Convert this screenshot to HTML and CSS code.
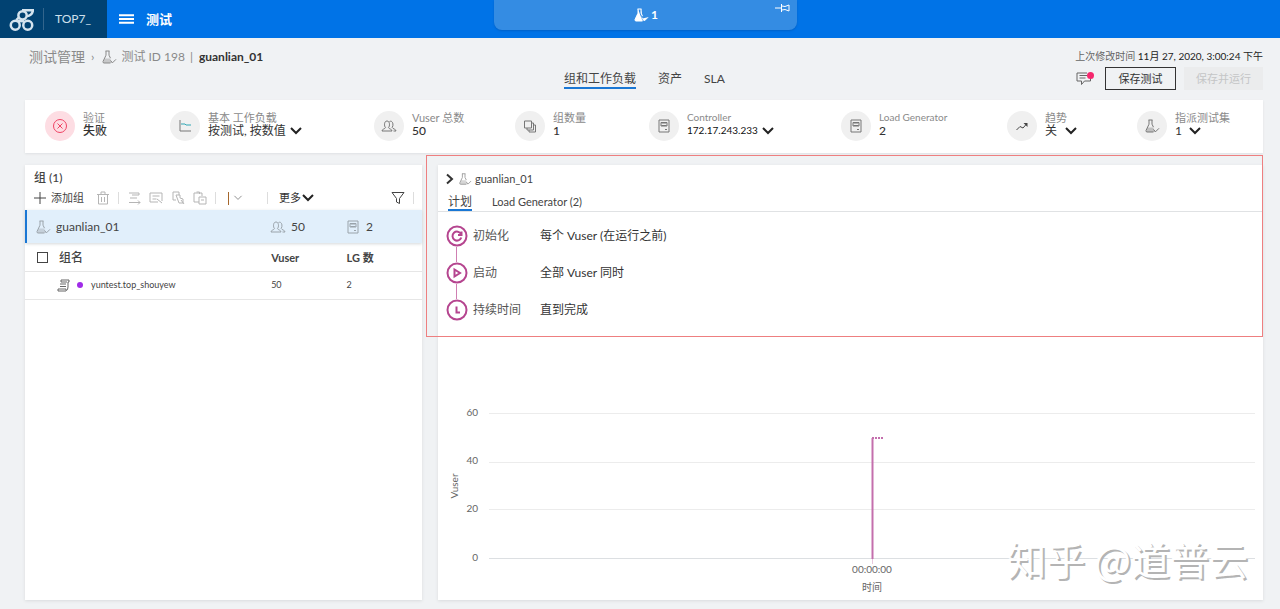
FILE: index.html
```html
<!DOCTYPE html>
<html lang="zh-CN">
<head>
<meta charset="utf-8">
<meta name="viewport" content="width=device-width, initial-scale=1">
<title>guanlian_01</title>
<link rel="stylesheet" href="styles.css">
</head>
<body>
<svg class="symbols" aria-hidden="true">
  <symbol id="flask" viewBox="0 0 16 16"><path d="M4.500 2h4M5 2v4.200L2 12.500q-.2 1.500 1 1.500h6.500M8 2v4.200l1.500 3M9.500 11.500l2 2.300 3.500-3.500"/><path class="fill" d="M3.500 9.500h5.500l2.500 4.500H2z"/></symbol>
  <symbol id="users" viewBox="0 0 16 16"><path d="M1 13c0-2 3-2 3.500-3.300C3 8 3 3 6 3s3 5 1.500 6.700C8 11 11 11 11 13zM8.500 3.500c3-1.500 4.500 3 2.700 6C11.700 11 15 11 15 13h-2.500"/></symbol>
  <symbol id="server" viewBox="0 0 16 16"><path d="M3 2h10v12H3zM5.500 5h5M5.500 7.500h5M9 11.500h2M5 4.500h6v3.500H5z"/></symbol>
  <symbol id="chevron" viewBox="0 0 14 10"><path d="M2 2l5 5 5-5"/></symbol>
</svg>

<header class="topbar">
  <div class="topbar-left">
    <a class="brand" href="#" aria-label="TOP7_">
      <svg class="logo" viewBox="0 0 24 24" aria-hidden="true"><circle cx="6" cy="17.500" r="4.300"/><circle cx="18" cy="17.500" r="4.300"/><circle cx="13" cy="8" r="4"/><path d="M12.500 3H23q-.5 5-6 6M7 12.500l3-3M8.500 13.500l6 .2"/></svg>
      <span class="brand-name">TOP7_</span>
    </a>
    <button class="menu-button" type="button"><svg class="burger" viewBox="0 0 16 12" aria-hidden="true"><path d="M0 2h16M0 6h16M0 10h16"/></svg><span>测试</span></button>
  </div>
  <div class="running">
    <svg class="icon running-icon"><use href="#flask"/></svg><span>1</span>
    <button class="pin" type="button" aria-label="固定"><svg viewBox="0 0 16 10"><path d="M0 5h6M6.500 1v8M7 3l3 .5 4-1.500v6l-4-1.500-3 .5"/></svg></button>
  </div>
</header>

<div class="page">
  <div class="page-head">
    <nav class="crumbs" aria-label="导航">
      <a class="crumb-root" href="#">测试管理</a><span class="crumb-sep">›</span><svg class="icon"><use href="#flask"/></svg><a href="#">测试 ID 198</a><span class="crumb-bar">|</span><strong>guanlian_01</strong>
    </nav>
    <nav class="tabs" aria-label="视图">
      <a class="tab active" href="#">组和工作负载</a><a class="tab" href="#">资产</a><a class="tab" href="#">SLA</a>
    </nav>
    <div class="actions">
      <p class="modified"><span>上次修改时间</span> <time datetime="2020-11-27T15:00:24">11月 27, 2020, 3:00:24 下午</time></p>
      <div class="action-row">
        <button class="comment" type="button" aria-label="注释"><svg viewBox="0 0 20 16"><path d="M15.500 7v3H9.500l-3 3.500V10H2V2h10M4.500 4.500h8M4.500 7h6"/><circle cx="15.500" cy="4.500" r="3.500"/></svg></button>
        <button class="btn" type="button">保存测试</button>
        <button class="btn btn-off" type="button" disabled>保存并运行</button>
      </div>
    </div>
  </div>

  <section class="summary">
    <div class="stat"><span class="badge badge-error"><svg class="icon" viewBox="0 0 16 16"><circle cx="8" cy="8" r="6.500"/><path d="M5.500 5.500l5 5M10.500 5.500l-5 5"/></svg></span><div class="stat-text"><p class="stat-label">验证</p><p class="stat-value">失败</p></div></div>
    <div class="stat"><span class="badge"><svg class="icon" viewBox="0 0 16 16"><path d="M3 2v11h11"/><path class="teal" d="M4 6h4l1 1h5"/></svg></span><div class="stat-text"><label class="stat-label" for="mode">基本 工作负载</label><div class="pick"><select id="mode"><option>按测试, 按数值</option></select><svg class="chev"><use href="#chevron"/></svg></div></div></div>
    <div class="stat"><span class="badge"><svg class="icon"><use href="#users"/></svg></span><div class="stat-text"><p class="stat-label">Vuser 总数</p><p class="stat-value">50</p></div></div>
    <div class="stat"><span class="badge"><svg class="icon" viewBox="0 0 16 16"><path d="M2.500 3h7v7h-7zM5 10v2h6.500V5H9.500M7 12v2h6.500V7H11.500"/></svg></span><div class="stat-text"><p class="stat-label">组数量</p><p class="stat-value">1</p></div></div>
    <div class="stat"><span class="badge"><svg class="icon"><use href="#server"/></svg></span><div class="stat-text"><label class="stat-label latin" for="controller">Controller</label><div class="pick latin"><select id="controller"><option>172.17.243.233</option></select><svg class="chev"><use href="#chevron"/></svg></div></div></div>
    <div class="stat"><span class="badge"><svg class="icon"><use href="#server"/></svg></span><div class="stat-text"><p class="stat-label latin">Load Generator</p><p class="stat-value">2</p></div></div>
    <div class="stat"><span class="badge"><svg class="icon dark" viewBox="0 0 16 16"><path d="M2.500 12l3.500-3.500 3 1.500 3.500-4"/><path class="head" d="M9.500 5h4v4z"/></svg></span><div class="stat-text"><label class="stat-label" for="trend">趋势</label><div class="pick pick-wide"><select id="trend"><option>关</option></select><svg class="chev"><use href="#chevron"/></svg></div></div></div>
    <div class="stat"><span class="badge"><svg class="icon"><use href="#flask"/></svg></span><div class="stat-text"><label class="stat-label" for="sets">指派测试集</label><div class="pick pick-wide"><select id="sets"><option>1</option></select><svg class="chev"><use href="#chevron"/></svg></div></div></div>
  </section>

  <main class="panels">
    <section class="card groups">
      <h2 class="groups-title">组 (1)</h2>
      <div class="toolbar">
        <button class="tool add" type="button"><svg class="icon" viewBox="0 0 14 14"><path d="M7 1v12M1 7h12"/></svg>添加组</button>
        <button class="tool" type="button" aria-label="删除"><svg class="icon" viewBox="0 0 14 14"><path d="M1 3.500h12M5 3V1h4v2M2.500 4v9h9V4M5.500 6v5M8.500 6v5"/></svg></button>
        <span class="divider"></span>
        <div class="tool-set">
          <button class="tool" type="button" aria-label="添加脚本"><svg class="icon" viewBox="0 0 14 14"><path d="M2 2h10v2H5M3 7h7M2 11.500h11M11 9.500l2 2-2 2"/></svg></button>
          <button class="tool" type="button" aria-label="编辑"><svg class="icon" viewBox="0 0 14 14"><path d="M1 2h12v8M1 2v9h8M3.500 5h7M3.500 8h4M8 8l5 4"/></svg></button>
          <button class="tool" type="button" aria-label="复制"><svg class="icon" viewBox="0 0 14 14"><path d="M2 1h6v3M2 1v8h3M5 4h4v3l3 1v4H8zM10 9l3 4"/></svg></button>
          <button class="tool" type="button" aria-label="粘贴"><svg class="icon" viewBox="0 0 14 14"><path d="M1 2h8v3M1 2v9h5M3.500 1h3v2M6 6h7v7H6zM8 9h3"/></svg></button>
        </div>
        <span class="divider"></span>
        <button class="tool color" type="button" aria-label="颜色"><span class="swatch"></span><svg class="icon"><use href="#chevron"/></svg></button>
        <span class="divider"></span>
        <button class="tool more" type="button">更多<svg class="chev"><use href="#chevron"/></svg></button>
        <button class="tool filter" type="button" aria-label="筛选"><svg class="icon" viewBox="0 0 14 14"><path d="M1 1.500h12L8.500 7.500v5l-3-1.500V7.500z"/></svg></button>
        <span class="divider"></span>
      </div>
      <div class="selected cols">
        <span class="cell"><svg class="icon"><use href="#flask"/></svg>guanlian_01</span>
        <span class="cell"><svg class="icon"><use href="#users"/></svg>50</span>
        <span class="cell"><svg class="icon"><use href="#server"/></svg>2</span>
      </div>
      <table class="scripts">
        <colgroup><col class="c-name"><col class="c-vuser"><col></colgroup>
        <thead><tr><th><label class="check"><input type="checkbox">组名</label></th><th>Vuser</th><th>LG 数</th></tr></thead>
        <tbody><tr><td><span class="script"><svg class="icon" viewBox="0 0 14 14"><path d="M4 2h8v2h-1v5M4 2v2h6M3 6h6M3 8.500h6M1 11h8v1.500q2 0 2-3.500M1 11v2h8"/></svg><i class="dot"></i>yuntest.top_shouyew</span></td><td>50</td><td>2</td></tr></tbody>
      </table>
    </section>

    <section class="card detail">
      <div class="plan">
        <div class="detail-title"><button class="expand" type="button" aria-label="展开"><svg viewBox="0 0 10 12"><path d="M2 1.500l5 4.500-5 4.500"/></svg></button><svg class="icon"><use href="#flask"/></svg><span>guanlian_01</span></div>
        <nav class="subtabs" aria-label="详细信息"><a class="subtab active" href="#">计划</a><a class="subtab" href="#">Load Generator (2)</a></nav>
        <dl class="steps">
          <div class="step"><svg class="step-icon" viewBox="0 0 22 22"><circle cx="11" cy="11" r="9.500"/><path d="M15 9a4.500 4.500 0 1 0 .3 3.500M15.500 6.500V10H12"/></svg><dt>初始化</dt><dd>每个 Vuser (在运行之前)</dd></div>
          <div class="step"><svg class="step-icon" viewBox="0 0 22 22"><circle cx="11" cy="11" r="9.500"/><path d="M8.500 7.500v7l5.500-3.500z"/></svg><dt>启动</dt><dd>全部 Vuser 同时</dd></div>
          <div class="step"><svg class="step-icon" viewBox="0 0 22 22"><circle cx="11" cy="11" r="9.500"/><path d="M10.500 7.500v6H14"/></svg><dt>持续时间</dt><dd>直到完成</dd></div>
        </dl>
      </div>
      <svg class="chart" viewBox="0 0 825 262" role="img" aria-label="Vuser 时间">
        <path class="grid" d="M51 76.500H817M51 125.500H817M51 172.500H817"/>
        <path class="axis" d="M51 221.500H817"/>
        <g class="ticks end"><text x="40" y="79">60</text><text x="40" y="127">40</text><text x="40" y="175">20</text><text x="40" y="224">0</text></g>
        <g class="ticks mid"><text x="434" y="236">00:00:00</text><text x="434" y="254">时间</text><text transform="translate(20 149) rotate(-90)">Vuser</text></g>
        <path class="series-tail" d="M434.500 222v5"/>
        <path class="series" d="M434.500 222V101"/>
        <path class="series dots" d="M434 101h12"/>
      </svg>
      <p class="watermark">知乎 @道普云</p>
    </section>
  </main>
</div>
</body>
</html>
```

FILE: styles.css
```css
* { box-sizing: border-box; }

body {
  margin: 0;
  min-height: 100vh;
  display: flex;
  flex-direction: column;
  background: #f0f2f4;
  color: #444;
  font: 12px/16px Lato, "Noto Sans CJK SC", sans-serif;
}

p, h2, dl, dd { margin: 0; }
a { color: inherit; text-decoration: none; }

button {
  display: flex;
  align-items: center;
  padding: 0;
  border: 0;
  background: none;
  color: inherit;
  font: inherit;
}

svg { flex: none; fill: none; stroke: currentColor; }
.symbols { position: absolute; width: 0; height: 0; }
.icon { width: 16px; height: 16px; }
.fill { fill: currentColor; fill-opacity: 0.4; stroke: none; }
.chev { width: 14px; height: 10px; stroke: #222; stroke-width: 2; }

/* Top bar */
.topbar {
  display: grid;
  grid-template-columns: 494fr 303fr 483fr;
  align-items: start;
  height: 38px;
  background: #0073e7;
  color: #fff;
}
.topbar-left { display: flex; height: 38px; }
.brand {
  display: flex;
  align-items: center;
  padding: 0 16px 0 9px;
  background: #014272;
}
.logo { width: 25px; height: 25px; stroke: #d4e3ee; stroke-width: 2.4; }
.brand-name {
  margin-left: 9px;
  padding-left: 11px;
  border-left: 1px solid #33658c;
  line-height: 22px;
  color: #cfe0ec;
}
.menu-button { gap: 12px; padding: 0 12px; font-size: 13px; font-weight: 700; }
.burger { width: 15px; height: 12px; stroke-width: 2; }
.running {
  position: relative;
  display: flex;
  align-items: center;
  justify-content: center;
  gap: 2px;
  height: 30px;
  border-radius: 0 0 8px 8px;
  background: #348ce3;
  box-shadow: 0 1px 2px #0062c8;
  font-weight: 700;
}
.running-icon { fill: #fff; }
.pin { position: absolute; top: 3px; right: 6px; }
.pin svg { width: 16px; height: 10px; }

/* Page heading */
.page {
  flex: 1;
  display: flex;
  flex-direction: column;
  padding: 0 17px 9px 25px;
}
.page-head {
  display: grid;
  grid-template-columns: 539fr 280fr 419fr;
  min-height: 62px;
}
.crumbs {
  display: flex;
  align-items: center;
  align-self: start;
  padding: 11px 0 0 4px;
  color: #8a8a8a;
}
.crumb-root { font-size: 14px; }
.crumb-sep { margin: 0 7px 0 6px; }
.crumbs .icon { margin-right: 4px; }
.crumb-bar { margin: 0 6px 0 5px; }
.crumbs strong { color: #333; }
.tabs { display: flex; gap: 22px; align-self: start; padding-top: 32px; }
.tab { height: 19px; line-height: 18px; }
.tab.active { border-bottom: 2px solid #1a77d4; }
.actions { padding-top: 10px; }
.modified { text-align: right; font-size: 10px; line-height: 16px; }
.modified span { color: #666; }
.modified time { color: #222; }
.action-row {
  display: flex;
  justify-content: flex-end;
  align-items: center;
  gap: 8px;
  margin-top: 3px;
}
.comment { margin-right: 2px; color: #666; }
.comment svg { width: 20px; height: 16px; }
.comment circle { fill: #f5276d; stroke: none; }
.btn {
  justify-content: center;
  width: 71px;
  height: 23px;
  border: 1px solid #333;
  color: #333;
  font-size: 11px;
}
.btn-off { width: 79px; border-color: #ebeced; background: #ebeced; color: #c4c5c6; }

/* Summary strip */
.summary {
  display: grid;
  grid-template-columns: 125fr 204fr 141fr 134fr 192fr 166fr 130fr 126fr;
  padding: 11px 0 12px 20px;
  background: #fff;
  box-shadow: 0 1px 2px #dfe1e3;
}
.stat { display: flex; align-items: flex-start; gap: 8px; white-space: nowrap; }
.badge {
  display: flex;
  align-items: center;
  justify-content: center;
  width: 30px;
  height: 30px;
  border-radius: 50%;
  background: #f0f0f0;
  color: #777;
}
.badge-error { background: #fddde3; color: #f04465; }
.teal { stroke: #31a7b5; }
.dark { color: #444; }
.head { fill: currentColor; stroke: none; }
.stat-label { display: block; color: #8a8a8a; font-size: 11px; line-height: 13px; }
.stat-value { color: #333; font-size: 12px; font-weight: 500; line-height: 13px; }
.pick { display: flex; align-items: center; gap: 3px; height: 13px; }
.pick-wide { gap: 6px; }
.pick select {
  appearance: none;
  padding: 0;
  border: 0;
  background: none;
  color: #333;
  font: inherit;
  line-height: 13px;
}
.stat-label.latin { font-size: 10px; }
.pick.latin { font-size: 10px; }
.pick.latin select { color: #111; }

/* Panels */
.panels {
  flex: 1;
  display: grid;
  grid-template-columns: 397fr 825fr;
  gap: 16px;
  margin-top: 12px;
}
.card { background: #fff; box-shadow: 0 1px 3px #d9dbdd; }

.groups-title { padding: 5px 9px 0; font-size: 12px; font-weight: 500; line-height: 16px; }
.toolbar {
  display: flex;
  align-items: center;
  height: 24px;
  padding: 0 8px;
  color: #b5b5b5;
}
.tool .icon { width: 14px; height: 14px; }
.add { gap: 4px; margin-right: 12px; color: #444; font-size: 11px; }
.divider { width: 1px; height: 12px; margin: 0 8px; background: #ddd; }
.tool-set { display: flex; gap: 8px; }
.tool.color { gap: 4px; margin: 0 16px 0 4px; color: #666; }
.color .icon { width: 10px; }
.swatch { width: 1px; height: 13px; background: #a5672c; }
.more { margin-left: 3px; color: #333; font-size: 11px; }
.filter { margin-left: auto; color: #444; }
.toolbar .divider:last-child { margin-right: 0; }

.selected {
  height: 33px;
  border-left: 2px solid #1a77d4;
  background: #e1effb;
  box-shadow: 0 1px 3px #d5d8db;
}
.cols { display: grid; grid-template-columns: 243fr 75fr 77fr; align-items: center; }
.cell { display: flex; align-items: center; gap: 5px; }
.cell:first-child { padding-left: 8px; }
.cell .icon { color: #9aa3aa; }

.scripts {
  width: 100%;
  margin-top: 2px;
  table-layout: fixed;
  border-collapse: collapse;
}
.c-name { width: 62%; }
.c-vuser { width: 19%; }
.scripts th, .scripts td {
  height: 28px;
  padding: 0;
  border-bottom: 1px solid #e6e6e6;
  text-align: left;
}
.scripts th { height: 26px; font-size: 11px; }
.scripts td { font-size: 9px; }
.check { display: flex; align-items: center; gap: 11px; padding-left: 12px; font-size: 12px; font-weight: 500; }
.check input {
  appearance: none;
  width: 11px;
  height: 11px;
  margin: 0;
  border: 1px solid #444;
}
.script { display: flex; align-items: center; padding-left: 32px; }
.script .icon { width: 14px; height: 14px; color: #666; }
.dot { width: 6px; height: 6px; margin: 0 8px 0 6px; border-radius: 50%; background: #a02be8; }

.detail { position: relative; }
.plan { position: relative; height: 172px; padding-top: 6px; }
.plan::before {
  content: "";
  position: absolute;
  inset: -10px 0 0 -12px;
  border: 1px solid #ee7f80;
  pointer-events: none;
}
.detail-title { display: flex; align-items: center; padding-left: 7px; font-size: 11px; }
.detail-title .icon { width: 14px; height: 14px; margin: 0 3px 0 3px; color: #999; }
.expand svg { width: 10px; height: 12px; stroke: #333; stroke-width: 2; }
.subtabs {
  display: flex;
  gap: 20px;
  margin-top: 5px;
  padding-left: 10px;
  border-bottom: 1px solid #e0e2e4;
}
.subtab { height: 19px; font-size: 11px; line-height: 19px; }
.subtab.active { border-bottom: 2px solid #1a77d4; font-size: 12px; }
.steps { padding: 13px 0 0 8px; }
.step { position: relative; display: flex; align-items: center; height: 22px; margin-bottom: 15px; }
.step:not(:last-child)::after {
  content: "";
  position: absolute;
  left: 10px;
  top: 22px;
  width: 1px;
  height: 15px;
  background: #cf7fb2;
}
.step-icon { width: 22px; height: 22px; stroke: #b5458f; stroke-width: 2; }
.step dt { width: 72px; padding-left: 5px; color: #555; white-space: nowrap; }
.step dd { color: #333; white-space: nowrap; }

.chart { display: block; width: 100%; height: auto; }
.grid { stroke: #ececec; }
.axis { stroke: #dcdfe2; }
.ticks { fill: #666; stroke: none; font-size: 10px; }
.end { text-anchor: end; }
.mid { text-anchor: middle; }
.series { stroke: #c46fad; stroke-width: 2; }
.series-tail { stroke: #e8c9de; }
.dots { stroke-dasharray: 2 1; }

.watermark {
  position: absolute;
  right: 15px;
  bottom: 18px;
  color: #fff;
  font: 39px/48px "Noto Sans CJK SC", sans-serif;
  text-shadow: 2px 2px 0 #b4b4b4;
}
```
